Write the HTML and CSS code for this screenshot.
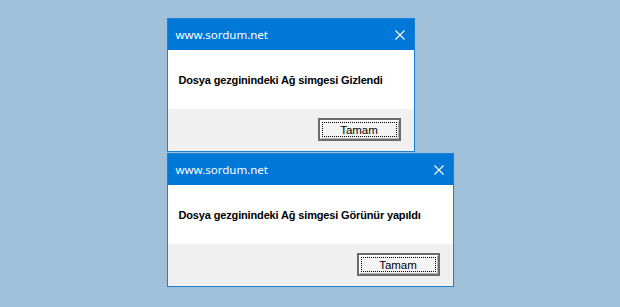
FILE: index.html
```html
<!DOCTYPE html>
<html lang="tr">
<head>
<meta charset="UTF-8" />
<title>www.sordum.net</title>
<link rel="stylesheet" href="styles.css">
</head>
<body>
  <div class="stack">
    <div class="dialog dialog-short">
      <div class="titlebar">
        <span class="title">www.sordum.net</span>
        <span class="close">
          <svg width="10" height="10" viewBox="0 0 10 10"><path d="M0.5 0.5 L9.5 9.5 M9.5 0.5 L0.5 9.5" stroke="#fff" stroke-width="1.1" fill="none"/></svg>
        </span>
      </div>
      <div class="message">Dosya gezginindeki Ağ simgesi Gizlendi</div>
      <div class="footer">
        <button class="btn">Tamam</button>
      </div>
    </div>

    <div class="dialog dialog-long">
      <div class="titlebar">
        <span class="title">www.sordum.net</span>
        <span class="close">
          <svg width="10" height="10" viewBox="0 0 10 10"><path d="M0.5 0.5 L9.5 9.5 M9.5 0.5 L0.5 9.5" stroke="#fff" stroke-width="1.1" fill="none"/></svg>
        </span>
      </div>
      <div class="message">Dosya gezginindeki Ağ simgesi Görünür yapıldı</div>
      <div class="footer">
        <button class="btn">Tamam</button>
      </div>
    </div>
  </div>
</body>
</html>
```

FILE: styles.css
```css
/* iki küçük windows mesaj kutusu */
body {
  margin: 0;
  padding-top: 18px;
  background: #a0bfd9;
  display: flex;
  justify-content: center;
  font-family: 'Liberation Sans', Arial, sans-serif;
}
.stack {
  width: 287px;
  display: flex;
  flex-direction: column;
  align-items: flex-start;
  gap: 1px;
}
.dialog {
  border: 1px solid #1a82d6;
  background: #fff;
}
.dialog-short {
  width: 246px;
}
.dialog-long {
  width: 285px;
}
.titlebar {
  height: 31px;
  background: #0078d7;
  display: flex;
  align-items: center;
  justify-content: space-between;
}
.title {
  padding-left: 8px;
  color: #fff;
  font-family: 'Noto Sans', sans-serif;
  font-size: 11.5px;
  padding-bottom: 1px;
}
.close {
  width: 28px;
  display: flex;
  justify-content: center;
  align-items: center;
}
.close svg {
  display: block;
}
.message {
  height: 59px;
  display: flex;
  align-items: center;
  padding-left: 11px;
  font-size: 11px;
  font-weight: 700;
  letter-spacing: -0.15px;
  color: #000;
}
.footer {
  height: 42px;
  background: #f0f0f0;
  display: flex;
  justify-content: flex-end;
  align-items: flex-start;
  padding-top: 9px;
  padding-right: 13px;
  box-sizing: border-box;
}
.btn {
  position: relative;
  width: 83px;
  height: 23px;
  padding: 0;
  border: 2px solid #6b6b6b;
  background: #f4f4f4;
  box-shadow: inset 1px 1px #fff, inset -1px -1px #b4b4b4;
  font-family: 'Liberation Sans', Arial, sans-serif;
  font-size: 11.5px;
  color: #000;
}
.btn::after {
  content: "";
  position: absolute;
  top: 2px;
  left: 2px;
  right: 2px;
  bottom: 2px;
  border: 1px dotted #000;
}
```
